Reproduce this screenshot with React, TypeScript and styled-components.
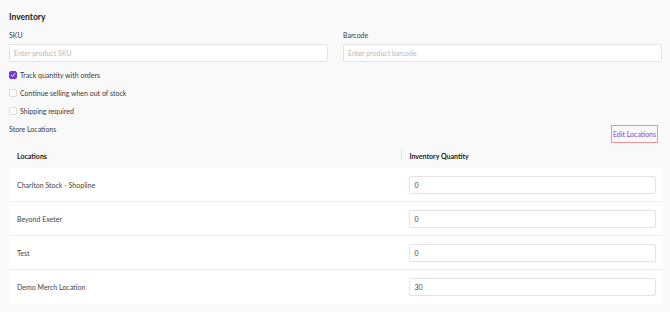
import styled, { createGlobalStyle } from "styled-components"

const GlobalStyle = createGlobalStyle`
  body {
    margin: 0;
    background: #f9f9f9;
    font-family: Lato, "Liberation Sans", sans-serif;
    color: #333;
  }
  * { box-sizing: border-box; }
`

const Page = styled.div`
  padding: 10px 7px 0 9px;
`

const Title = styled.h2`
  margin: 0 0 6px;
  font-size: 8.5px;
  line-height: 14px;
  font-weight: 700;
  color: #1c1c1c;
`

const FieldGrid = styled.div`
  display: grid;
  grid-template-columns: 1fr 1fr;
  column-gap: 15px;
  padding-right: 1px;
`

const Field = styled.label`
  display: flex;
  flex-direction: column;
  gap: 4px;
`

const Label = styled.span`
  font-size: 7px;
  line-height: 10px;
  color: #3a3a3a;
`

const TextInput = styled.input`
  height: 18px;
  width: 100%;
  border: 1px solid #e4e4e4;
  border-radius: 2px;
  background: #fff;
  padding: 0 4px;
  font-family: inherit;
  font-size: 7px;
  color: #444;
  outline: none;
  &::placeholder { color: #b8b8b8; }
`

const Checks = styled.div`
  margin-top: 4px;
  display: flex;
  flex-direction: column;
`

const CheckRow = styled.label`
  height: 18px;
  display: flex;
  align-items: center;
  gap: 3px;
  font-size: 7px;
  color: #3a3a3a;
`

const Box = styled.span<{ $checked?: boolean }>`
  width: 8px;
  height: 8px;
  border-radius: 2px;
  display: flex;
  align-items: center;
  justify-content: center;
  background: ${p => (p.$checked ? "#7b34d9" : "#fff")};
  border: 1px solid ${p => (p.$checked ? "#7b34d9" : "#dcdcdc")};
`

const StoreBar = styled.div`
  margin-top: 4px;
  display: flex;
  justify-content: space-between;
  align-items: flex-start;
  padding-right: 5px;
`

const EditButton = styled.button`
  margin-top: 1px;
  height: 18px;
  width: 47px;
  padding: 0;
  border: 1px solid #f19393;
  background: transparent;
  color: #8b3fd4;
  font-family: inherit;
  font-size: 7px;
`

const Table = styled.div`
  display: grid;
  grid-template-columns: 60% 40%;
`

const HeadCell = styled.div`
  height: 25px;
  display: flex;
  align-items: center;
  font-size: 7px;
  font-weight: 700;
  color: #222;
  padding-left: 8px;
`

const HeadDivider = styled.span`
  width: 1px;
  height: 9px;
  background: #e4e4e4;
  margin: 0 7px 0 -8px;
`

const Cell = styled.div<{ $last?: boolean }>`
  height: 34px;
  background: #fff;
  display: flex;
  align-items: center;
  border-bottom: 1px solid ${p => (p.$last ? "#fff" : "#f1f1f1")};
  font-size: 7px;
  color: #444;
  padding: 0 7px 0 8px;
`

const QtyCell = styled(Cell)`
  padding-top: 1px;
`

const Check = () => (
  <svg width="6" height="6" viewBox="0 0 10 10">
    <path d="M2 5.2 L4.2 7.3 L8 2.8" fill="none" stroke="#fff" strokeWidth="1.6" strokeLinecap="round" strokeLinejoin="round" />
  </svg>
)

const locations = [
  { name: "Charlton Stock - Shopline", qty: "0" },
  { name: "Beyond Exeter", qty: "0" },
  { name: "Test", qty: "0" },
  { name: "Demo Merch Location", qty: "30" },
]

const options = [
  { text: "Track quantity with orders", checked: true },
  { text: "Continue selling when out of stock", checked: false },
  { text: "Shipping required", checked: false },
]

export default function App() {
  return (
    <>
      <GlobalStyle />
      <Page>
        <Title>Inventory</Title>
        <FieldGrid>
          <Field>
            <Label>SKU</Label>
            <TextInput placeholder="Enter product SKU" />
          </Field>
          <Field>
            <Label>Barcode</Label>
            <TextInput placeholder="Enter product barcode" />
          </Field>
        </FieldGrid>
        <Checks>
          {options.map(o => (
            <CheckRow key={o.text}>
              <Box $checked={o.checked}>{o.checked && <Check />}</Box>
              {o.text}
            </CheckRow>
          ))}
        </Checks>
        <StoreBar>
          <Label>Store Locations</Label>
          <EditButton type="button">Edit Locations</EditButton>
        </StoreBar>
        <Table>
          <HeadCell>Locations</HeadCell>
          <HeadCell>
            <HeadDivider />
            Inventory Quantity
          </HeadCell>
          {locations.map((l, i) => {
            const last = i === locations.length - 1
            return [
              <Cell key={l.name + "n"} $last={last}>{l.name}</Cell>,
              <QtyCell key={l.name + "q"} $last={last}>
                <TextInput defaultValue={l.qty} />
              </QtyCell>,
            ]
          })}
        </Table>
      </Page>
    </>
  )
}
